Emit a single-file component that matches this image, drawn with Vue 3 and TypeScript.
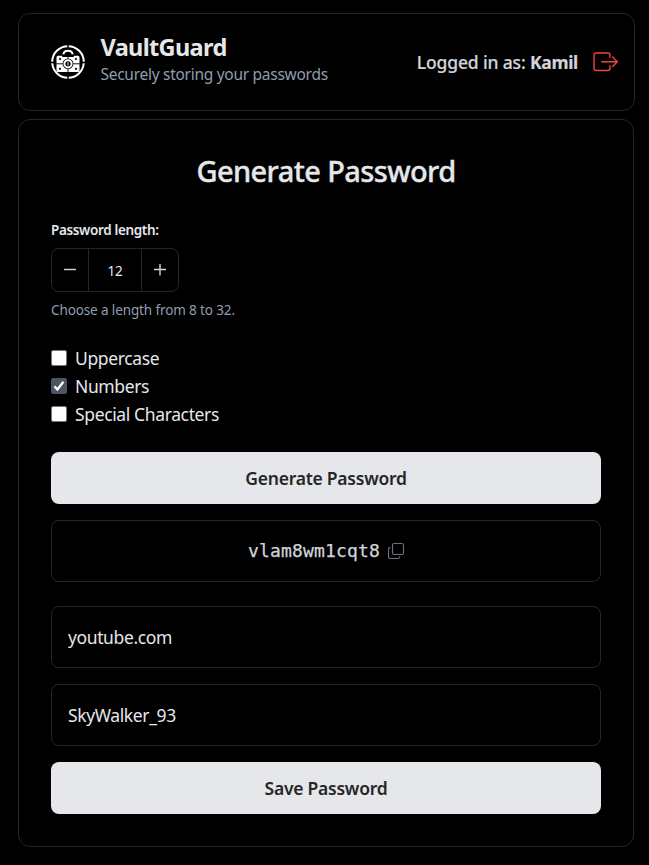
<script setup lang="ts">
import { ref } from 'vue'

const MIN_LENGTH = 8
const MAX_LENGTH = 32

interface CharacterOption {
  id: string
  label: string
  checked: boolean
}

const length = ref(12)
const options = ref<CharacterOption[]>([
  { id: 'uppercase', label: 'Uppercase', checked: false },
  { id: 'numbers', label: 'Numbers', checked: true },
  { id: 'special', label: 'Special Characters', checked: false },
])
const password = ref('vlam8wm1cqt8')
const website = ref('youtube.com')
const username = ref('SkyWalker_93')

function changeLength(delta: number): void {
  length.value = Math.min(MAX_LENGTH, Math.max(MIN_LENGTH, length.value + delta))
}

function generate(): void {
  let pool = 'abcdefghijklmnopqrstuvwxyz'
  const enabled = (id: string) => options.value.some((o) => o.id === id && o.checked)
  if (enabled('uppercase')) pool += 'ABCDEFGHIJKLMNOPQRSTUVWXYZ'
  if (enabled('numbers')) pool += '0123456789'
  if (enabled('special')) pool += '!@#$%^&*()_+-='
  const values = crypto.getRandomValues(new Uint32Array(length.value))
  password.value = Array.from(values, (n) => pool[n % pool.length]).join('')
}
</script>

<template>
  <div class="page">
    <header class="header">
      <div class="brand">
        <svg class="logo" viewBox="0 0 34 34" fill="none">
          <circle cx="17" cy="17" r="15.8" stroke="#fff" stroke-width="2" />
          <path d="M17 0v4M17 30v4M0 17.5h4M30 17.5h4" stroke="#000" stroke-width="1.4" />
          <path d="M12.4 9.4c.6-4.8 8.6-4.8 9.2 0" stroke="#fff" stroke-width="2" />
          <path d="M7 10.8h3.6l1.2 1.2h10.4l1.2-1.2H27q1.5 0 1.5 1.5v13.2q0 1.5-1.5 1.5H7q-1.5 0-1.5-1.5V12.3q0-1.5 1.5-1.5z" fill="#fff" />
          <path d="M17 10v18M5 18.8h24" stroke="#000" stroke-width=".9" />
          <circle cx="17" cy="18.8" r="5.4" fill="#000" />
          <circle cx="17" cy="18.8" r="3.6" stroke="#fff" stroke-width="2" />
          <path d="M17 17.2v3.4" stroke="#fff" stroke-width="1" />
          <g fill="#000">
            <circle cx="9" cy="14" r="1.1" />
            <circle cx="25" cy="14" r="1.1" />
            <circle cx="9" cy="23.8" r="1.1" />
            <circle cx="25" cy="23.8" r="1.1" />
          </g>
        </svg>
        <div class="brand-text">
          <div class="name">VaultGuard</div>
          <div class="tagline">Securely storing your passwords</div>
        </div>
      </div>
      <div class="account">
        <span class="user">Logged in as: <b>Kamil</b></span>
        <button class="logout" type="button" aria-label="Log out">
          <svg viewBox="0 0 26 20" fill="none" stroke="#ef4444" stroke-width="1.4" stroke-linecap="round" stroke-linejoin="round">
            <path d="M17 5.2V3a2 2 0 0 0-2-2H3a2 2 0 0 0-2 2v13.5a2 2 0 0 0 2 2h12a2 2 0 0 0 2-2v-2.8M8.7 9.8h15.5M19.6 5.1l4.7 4.7-4.7 4.7" />
          </svg>
        </button>
      </div>
    </header>

    <main class="card">
      <h1 class="title">Generate Password</h1>

      <div class="label">Password length:</div>
      <div class="stepper">
        <button type="button" aria-label="Decrease" @click="changeLength(-1)">
          <svg viewBox="0 0 12 12"><path d="M0 5.5h12" /></svg>
        </button>
        <span class="count">{{ length }}</span>
        <button type="button" aria-label="Increase" @click="changeLength(1)">
          <svg viewBox="0 0 12 12"><path d="M0 5.5h12M6 0v11.5" /></svg>
        </button>
      </div>
      <p class="hint">Choose a length from 8 to 32.</p>

      <div class="options">
        <label v-for="option in options" :key="option.id" class="option">
          <input v-model="option.checked" type="checkbox" />
          <span class="box">
            <svg v-if="option.checked" viewBox="0 0 16 16" fill="none">
              <path d="M3.4 8.4l3 3 6-7.6" stroke="#fff" stroke-width="2.3" />
            </svg>
          </span>
          <span>{{ option.label }}</span>
        </label>
      </div>

      <button class="primary generate" type="button" @click="generate">Generate Password</button>

      <div class="result">
        <span class="password">{{ password }}</span>
        <svg viewBox="0 0 18 18" fill="none" stroke="#6b7280" stroke-width="1.1" stroke-linecap="round">
          <rect x="5.5" y="1.5" width="11" height="11" rx="1.8" />
          <path d="M3.2 5.5a1.7 1.7 0 0 0-1.7 1.7v7.6a1.7 1.7 0 0 0 1.7 1.7h7.6a1.7 1.7 0 0 0 1.7-1.7" />
        </svg>
      </div>

      <input v-model="website" class="field website" type="text" aria-label="Website" spellcheck="false" />
      <input v-model="username" class="field username" type="text" aria-label="Username" spellcheck="false" />
      <button class="primary save" type="button">Save Password</button>
    </main>
  </div>
</template>

<style>
body {
  background: #000;
}
</style>

<style scoped>
* {
  box-sizing: border-box;
}

.page {
  height: 865px;
  padding: 13px 14px 0 18px;
  background: #000;
  color: #e5e7eb;
  font-family: 'Noto Sans', 'Open Sans', sans-serif;
}

button,
input {
  font-family: inherit;
  color: inherit;
}

button {
  padding: 0;
  border: 0;
  background: transparent;
}

.header {
  height: 98px;
  padding: 0 15px 0 32px;
  border: 1px solid #262626;
  border-radius: 12px;
  display: flex;
  align-items: center;
  justify-content: space-between;
}

.brand,
.account {
  display: flex;
  align-items: center;
}

.brand {
  gap: 15.5px;
}

.brand-text {
  padding-bottom: 4px;
}

.logo {
  width: 34px;
  height: 34px;
}

.name {
  font-size: 23.5px;
  font-weight: 700;
  line-height: 28px;
  letter-spacing: -0.65px;
}

.tagline {
  color: #909dae;
  font-size: 15.5px;
  line-height: 26px;
  letter-spacing: -0.28px;
}

.account {
  gap: 15px;
}

.user {
  color: #d1d5db;
  font-size: 17.5px;
  font-weight: 500;
  line-height: 28px;
  letter-spacing: -0.16px;
  white-space: nowrap;
  -webkit-text-stroke: 0.2px #d1d5db;
}

.user b {
  font-weight: 700;
  letter-spacing: -0.3px;
}

.logout {
  width: 26px;
  height: 20px;
}

.logout svg {
  display: block;
}

.card {
  width: 616px;
  height: 728px;
  margin-top: 8px;
  padding: 32px;
  border: 1px solid #262626;
  border-radius: 12px;
  display: flex;
  flex-direction: column;
}

.title {
  margin: 0;
  padding-top: 1px;
  font-size: 29px;
  font-weight: 500;
  line-height: 36px;
  letter-spacing: -0.6px;
  text-align: center;
  -webkit-text-stroke: 0.35px #e5e7eb;
}

.label {
  margin-top: 31px;
  font-size: 13.5px;
  font-weight: 600;
  line-height: 20px;
  letter-spacing: -0.35px;
}

.stepper {
  width: 128px;
  height: 44px;
  margin-top: 8px;
  border: 1px solid #262626;
  border-radius: 8px;
  display: grid;
  grid-template-columns: 36px 1fr 36px;
}

.stepper button {
  display: flex;
  align-items: center;
  justify-content: center;
}

.stepper svg {
  width: 12px;
  height: 12px;
  stroke: #d4d4d4;
  stroke-width: 1.4;
}

.count {
  height: 42px;
  border: solid #262626;
  border-width: 0 1px;
  font-size: 13.5px;
  line-height: 44px;
  letter-spacing: -0.1px;
  text-align: center;
}

.hint {
  margin: 8px 0 0;
  color: #909dae;
  font-size: 13.5px;
  line-height: 20px;
  letter-spacing: -0.12px;
}

.options {
  margin-top: 24px;
}

.option {
  height: 28px;
  display: flex;
  align-items: center;
  gap: 8px;
  font-size: 17.5px;
  letter-spacing: -0.37px;
}

.option input {
  appearance: none;
  width: 0;
  height: 0;
  margin: 0 -8px 0 0;
}

.box {
  width: 16px;
  height: 16px;
  border: 1px solid #767676;
  border-radius: 2px;
  background: #fff;
}

.option input:checked + .box {
  border-color: #4b5563;
  background: #4b5563;
}

.box svg {
  display: block;
  width: 16px;
  height: 16px;
  margin: -1px;
}

.primary {
  height: 52px;
  border-radius: 8px;
  background: #e5e7eb;
  color: #262626;
  font-size: 17.5px;
  font-weight: 600;
  letter-spacing: -0.24px;
}

.generate {
  margin-top: 24px;
}

.result {
  height: 62px;
  margin-top: 16px;
  border: 1px solid #262626;
  border-radius: 8px;
  display: flex;
  align-items: center;
  justify-content: center;
  gap: 7px;
  padding-left: 1px;
}

.result svg {
  width: 18px;
  height: 18px;
}

.password {
  padding-bottom: 2px;
  color: #d1d5db;
  font-family: 'DejaVu Sans Mono', monospace;
  font-size: 18px;
  letter-spacing: 0.16px;
  -webkit-text-stroke: 0.25px #d1d5db;
}

.field {
  width: 100%;
  height: 62px;
  padding: 0 16px;
  border: 1px solid #262626;
  border-radius: 8px;
  outline: none;
  background: transparent;
  font-size: 17.5px;
  letter-spacing: -0.38px;
}

.website {
  margin-top: 24px;
}

.username,
.save {
  margin-top: 16px;
}
</style>
